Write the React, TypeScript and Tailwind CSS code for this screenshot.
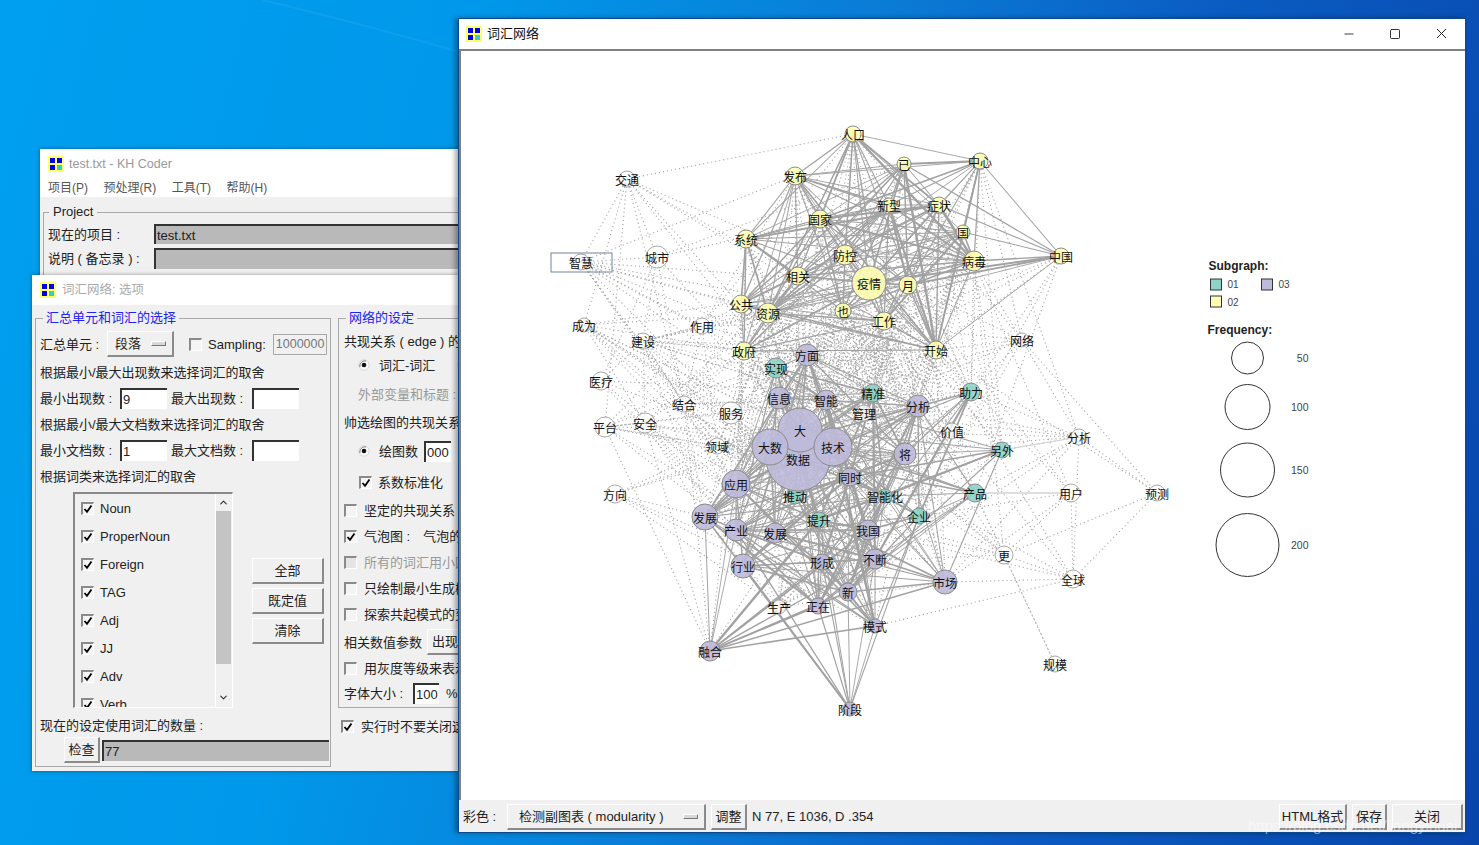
import { ChevronDown, ChevronUp, Minus, Square, X } from "lucide-react";
import type { ReactNode } from "react";

type Group = "a" | "b" | "c" | "w";
type GraphNode = [string, number, number, number, Group];

const NODES: GraphNode[] = [
  ["人口", 853, 135, 8, "b"], ["发布", 795, 177, 9, "b"], ["已", 904, 165, 7, "b"],
  ["中心", 980, 162, 8, "b"], ["新型", 889, 206, 7, "b"], ["症状", 939, 206, 8, "b"],
  ["国家", 820, 220, 9, "b"], ["国", 963, 233, 7, "b"], ["系统", 746, 240, 9, "b"],
  ["防控", 845, 256, 10, "b"], ["病毒", 974, 262, 10, "b"], ["中国", 1061, 257, 8, "b"],
  ["疫情", 869, 284, 17, "b"], ["月", 908, 286, 9, "b"], ["相关", 798, 277, 9, "b"],
  ["公共", 741, 305, 9, "b"], ["资源", 768, 314, 10, "b"], ["也", 843, 312, 8, "b"],
  ["工作", 884, 322, 9, "b"], ["开始", 936, 351, 9, "b"], ["政府", 744, 352, 9, "b"],

  ["实现", 776, 369, 10, "a"], ["精准", 873, 394, 9, "a"], ["助力", 971, 393, 9, "a"],
  ["另外", 1002, 451, 8, "a"], ["产品", 975, 494, 9, "a"], ["智能化", 885, 497, 7, "a"],
  ["企业", 919, 517, 8, "a"], ["推动", 795, 497, 8, "a"], ["提升", 819, 521, 8, "a"],

  ["数据", 798, 460, 32, "c"], ["大", 800, 431, 22, "c"], ["大数", 770, 448, 18, "c"],
  ["技术", 833, 448, 19, "c"], ["方面", 807, 356, 11, "c"], ["信息", 779, 399, 11, "c"],
  ["智能", 826, 401, 10, "c"], ["分析", 918, 407, 11, "c"], ["将", 905, 455, 11, "c"],
  ["同时", 850, 478, 9, "c"], ["应用", 736, 485, 14, "c"], ["发展", 705, 518, 13, "c"],
  ["产业", 736, 531, 11, "c"], ["发展", 775, 534, 10, "c"], ["我国", 868, 531, 10, "c"],
  ["不断", 875, 560, 10, "c"], ["形成", 822, 563, 8, "c"], ["行业", 743, 567, 12, "c"],
  ["新", 848, 593, 9, "c"], ["正在", 818, 607, 8, "c"], ["模式", 875, 627, 7, "c"],
  ["融合", 710, 652, 10, "c"], ["阶段", 850, 710, 7, "c"], ["市场", 945, 583, 12, "c"],

  ["生产", 779, 608, 7, "w"], ["管理", 864, 414, 8, "w"], ["交通", 627, 180, 8, "w"],
  ["智慧", 581, 263, 8, "w"], ["城市", 657, 258, 11, "w"], ["成为", 584, 326, 7, "w"],
  ["建设", 643, 342, 8, "w"], ["作用", 702, 327, 8, "w"], ["医疗", 601, 382, 9, "w"],
  ["结合", 684, 405, 8, "w"], ["服务", 731, 414, 11, "w"], ["平台", 605, 428, 10, "w"],
  ["安全", 645, 424, 10, "w"], ["领域", 717, 447, 8, "w"], ["方向", 615, 495, 9, "w"],
  ["网络", 1022, 341, 7, "w"], ["价值", 952, 432, 8, "w"], ["分析", 1079, 438, 8, "w"],
  ["用户", 1071, 494, 9, "w"], ["预测", 1157, 494, 8, "w"], ["更", 1004, 556, 9, "w"],
  ["全球", 1073, 580, 9, "w"], ["规模", 1055, 665, 8, "w"],
];

const FILL: Record<Group, string> = { a: "#8dd3c7", b: "#ffffb3", c: "#bebada", w: "#ffffff" };

// small fixed-seed generator so the graph comes out the same on every load
let seed = 20211;
const rnd = () => {
  seed = (seed * 1664525 + 1013904223) % 4294967296;
  return seed / 4294967296;
};

type Edge = { x1: number; y1: number; x2: number; y2: number; dotted: boolean; w: number };

function buildEdges() {
  const edges: Edge[] = [];
  for (let i = 0; i < NODES.length; i++) {
    for (let j = i + 1; j < NODES.length; j++) {
      const [n1, x1, y1, , g1] = NODES[i];
      const [n2, x2, y2, , g2] = NODES[j];
      const d = Math.hypot(x1 - x2, y1 - y2);
      const pair = [g1, g2].sort().join("");
      const hit = rnd();
      // the two outer hubs only fan upward in the picture
      if (n1 === "融合" && n2 === "阶段") continue;
      if (n1 === "阶段" && n2 === "市场") continue;
      let p = 0;
      let dotted = false;
      if (pair === "bb") p = d < 235 ? 0.72 : 0;
      else if (pair === "cc") p = d < 245 ? 0.62 : 0;
      else if (pair === "aa") p = d < 210 ? 0.6 : 0;
      else if (pair === "ac") p = d < 210 ? 0.55 : 0;
      else {
        dotted = true;
        if (pair === "bc") p = d < 330 ? 0.5 : 0;
        else if (pair === "ab") p = d < 300 ? 0.28 : 0;
        else if (pair === "ww") p = d < 250 ? 0.3 : 0;
        else p = d < 300 ? 0.28 : 0;
      }
      if (hit < p) {
        edges.push({ x1, y1, x2, y2, dotted, w: dotted ? 1 : 0.9 + rnd() * rnd() * 1.6 });
      }
    }
  }
  return edges;
}

const EDGES = buildEdges();

function NetworkChart() {
  return (
    <svg className="block" width={1004} height={749} viewBox="461 52 1004 749">
      {EDGES.filter((e) => e.dotted).map((e, i) => (
        <line key={i} x1={e.x1} y1={e.y1} x2={e.x2} y2={e.y2} stroke="#a4a4a4" strokeWidth={1.1} strokeDasharray="1.1 3" />
      ))}
      {EDGES.filter((e) => !e.dotted).map((e, i) => (
        <line key={i} x1={e.x1} y1={e.y1} x2={e.x2} y2={e.y2} stroke="#a2a2a2" strokeWidth={e.w} />
      ))}
      <line x1={975} y1={494} x2={1071} y2={494} stroke="#d4d4d4" strokeWidth={1.4} />
      <line x1={1002} y1={451} x2={1079} y2={438} stroke="#d4d4d4" strokeWidth={1.2} />
      {NODES.map(([label, x, y, r, g], i) => (
        <circle
          key={i}
          cx={x}
          cy={y}
          r={r}
          fill={FILL[g]}
          fillOpacity={g === "w" ? 0.75 : 0.9}
          stroke={g === "w" ? "#a8a8a8" : "#8a8a8a"}
          strokeWidth={1}
          data-label={label}
        />
      ))}
      <rect x={551} y={254} width={61} height={19} fill="none" stroke="#70829b" strokeWidth={1} />
      <g className="font-['Noto_Sans_CJK_SC',sans-serif]" fontSize={12} fill="#111" textAnchor="middle" dominantBaseline="central">
        {NODES.map(([label, x, y], i) => (
          <text key={i} x={x} y={y}>
            {label}
          </text>
        ))}
      </g>

      <g className="font-['Liberation_Sans',sans-serif]" transform="translate(0.5 1)">
        <text x={1208} y={270} fontSize={12} fontWeight={700} fill="#222">Subgraph:</text>
        <rect x={1210} y={279} width={11} height={11} fill="#8dd3c7" stroke="#333" />
        <rect x={1261} y={279} width={11} height={11} fill="#bebada" stroke="#333" />
        <rect x={1210} y={296} width={11} height={11} fill="#ffffb3" stroke="#333" />
        <text x={1227} y={288} fontSize={10} fill="#444">01</text>
        <text x={1278} y={288} fontSize={10} fill="#444">03</text>
        <text x={1227} y={306} fontSize={10} fill="#444">02</text>
        <text x={1207} y={334} fontSize={12} fontWeight={700} fill="#222">Frequency:</text>
        <circle cx={1247} cy={358} r={16} fill="none" stroke="#333" />
        <circle cx={1247} cy={407} r={22.5} fill="none" stroke="#333" />
        <circle cx={1247} cy={470} r={27} fill="none" stroke="#333" />
        <circle cx={1247} cy={545} r={31.5} fill="none" stroke="#333" />
        <text x={1308} y={362} fontSize={10.5} fill="#444" textAnchor="end">50</text>
        <text x={1308} y={411} fontSize={10.5} fill="#444" textAnchor="end">100</text>
        <text x={1308} y={474} fontSize={10.5} fill="#444" textAnchor="end">150</text>
        <text x={1308} y={549} fontSize={10.5} fill="#444" textAnchor="end">200</text>
      </g>
    </svg>
  );
}

function AppIcon() {
  return (
    <div className="grid h-[16px] w-[16px] shrink-0 grid-cols-2 gap-[2px] bg-[#ffff66] p-[2px]">
      <div className="bg-[#0000e6]" />
      <div className="bg-[#0000e6]" />
      <div className="bg-[#0000e6]" />
      <div className="bg-[#33cccc]" />
    </div>
  );
}

const raised = "flex items-center justify-center bg-[#f0f0f0] border-t border-l border-t-white border-l-white border-r-2 border-b-2 border-r-[#8a8a8a] border-b-[#8a8a8a]";
const sunkenGray = "flex items-center bg-[#b9b9b9] border-t-2 border-l-2 border-t-[#333] border-l-[#333] pl-[1px]";
const sunkenWhite = "flex items-center bg-white border-t-2 border-l-2 border-t-[#333] border-l-[#333] pl-[1px]";

function Btn({ className, children }: { className: string; children: ReactNode }) {
  return <div className={`${raised} ${className}`}>{children}</div>;
}

function Check({ checked, disabled }: { checked?: boolean; disabled?: boolean }) {
  return (
    <span
      className={`flex h-[13px] w-[13px] shrink-0 items-center justify-center border-t-2 border-l-2 border-t-[#8a8a8a] border-l-[#8a8a8a] border-r border-b border-r-white border-b-white ${disabled ? "bg-[#e4e4e4]" : "bg-[#f4f4f4]"}`}
    >
      {checked && (
        <svg width="10" height="10" viewBox="0 0 10 10">
          <path d="M1.5 5 L4 7.8 L8.5 1.5" fill="none" stroke="#000" strokeWidth="1.8" />
        </svg>
      )}
    </span>
  );
}

function Radio() {
  return (
    <svg width="12" height="12" viewBox="0 0 12 12" className="shrink-0">
      <circle cx="6" cy="6" r="5.2" fill="#f8f8f8" stroke="#d8d8d8" />
      <path d="M2 8 A5 5 0 0 1 8 2" fill="none" stroke="#777" />
      <circle cx="6" cy="6" r="2.3" fill="#111" />
    </svg>
  );
}

function Indicator() {
  return <span className="block h-[5px] w-[15px] border border-t-white border-l-white border-r-[#777] border-b-[#777] bg-[#d8d8d8]" />;
}

function ListRow({ label }: { label: string }) {
  return (
    <div className="flex h-[28px] shrink-0 items-center pl-[6px]">
      <Check checked />
      <span className="ml-[6px]">{label}</span>
    </div>
  );
}

function BackWindow() {
  return (
    <div className="absolute left-[40px] top-[149px] h-[140px] w-[418px] bg-[#f0f0f0] shadow-[0_0_4px_rgba(0,0,0,0.4)]">
      <div className="flex h-[30px] items-center gap-[5px] bg-white pl-[8px] text-[12.5px] text-[#999]">
        <AppIcon />
        <span>test.txt - KH Coder</span>
      </div>
      <div className="flex h-[18px] items-center gap-[15.5px] bg-white pl-[8px] text-[12px] text-[#555]">
        <span>项目(P)</span>
        <span>预处理(R)</span>
        <span>工具(T)</span>
        <span>帮助(H)</span>
      </div>
      <fieldset className="ml-[3px] mt-[6px] h-[100px] border border-r-0 border-[#a8a8a8] pl-[4px]">
        <legend className="ml-[1px] h-[18px] px-[4px] leading-[18px]">Project</legend>
        <div className="mt-[3px] flex h-[20px] items-center">
          <span className="w-[106px]">现在的项目 :</span>
          <div className={`${sunkenGray} h-[20px] flex-1`}>test.txt</div>
        </div>
        <div className="mt-[4px] flex h-[21px] items-center">
          <span className="w-[106px]">说明 ( 备忘录 ) :</span>
          <div className={`${sunkenGray} h-[21px] flex-1`} />
        </div>
      </fieldset>
    </div>
  );
}

function OptionWindow() {
  return (
    <div className="absolute left-[32px] top-[275px] flex h-[496px] w-[427px] flex-col bg-[#f0f0f0] shadow-[0_0_4px_rgba(0,0,0,0.4)]">
      <div className="flex h-[30px] shrink-0 items-center gap-[6px] bg-white pl-[8px] text-[12.5px] text-[#aaa]">
        <AppIcon />
        <span>词汇网络: 选项</span>
      </div>
      <div className="flex flex-1 pl-[3px] pt-[4px]">
        <fieldset className="h-[458px] w-[296px] shrink-0 border border-[#a8a8a8] pl-[4px]">
          <legend className="ml-[3px] h-[18px] px-[3px] leading-[18px] text-[#2222ee]">汇总单元和词汇的选择</legend>
          <div className="mt-[4px] flex h-[26px] items-center">
            <span className="w-[67px]">汇总单元 :</span>
            <Btn className="h-[26px] w-[67px] !justify-between pl-[7px] pr-[6px]">
              <span>段落</span>
              <Indicator />
            </Btn>
            <div className="ml-[15px]">
              <Check />
            </div>
            <span className="ml-[6px]">Sampling:</span>
            <div className="ml-[7px] flex h-[21px] w-[54px] items-center border border-[#a8a8a8] pl-[2px] text-[12.5px] text-[#777]">1000000</div>
          </div>
          <div className="mt-[2px] flex h-[26px] items-center">根据最小/最大出现数来选择词汇的取舍</div>
          <div className="flex h-[26px] items-center">
            <span className="w-[80px]">最小出现数 :</span>
            <div className={`${sunkenWhite} h-[21px] w-[47px]`}>9</div>
            <span className="ml-[4px] w-[81px]">最大出现数 :</span>
            <div className={`${sunkenWhite} h-[21px] w-[47px]`} />
          </div>
          <div className="flex h-[26px] items-center">根据最小/最大文档数来选择词汇的取舍</div>
          <div className="flex h-[26px] items-center">
            <span className="w-[80px]">最小文档数 :</span>
            <div className={`${sunkenWhite} h-[21px] w-[47px]`}>1</div>
            <span className="ml-[4px] w-[81px]">最大文档数 :</span>
            <div className={`${sunkenWhite} h-[21px] w-[47px]`} />
          </div>
          <div className="flex h-[26px] items-center">根据词类来选择词汇的取舍</div>
          <div className="mt-[3px] flex">
            <div className="ml-[33px] flex h-[216px] w-[160px] overflow-hidden border-t-2 border-l-2 border-t-[#888] border-l-[#888] border-r border-b border-r-white border-b-white">
              <div className="flex h-[240px] w-[141px] flex-col border-r border-r-white">
                {["Noun", "ProperNoun", "Foreign", "TAG", "Adj", "JJ", "Adv", "Verb"].map((t) => (
                  <ListRow key={t} label={t} />
                ))}
              </div>
              <div className="flex w-[15px] flex-col items-center">
                <div className="flex h-[17px] shrink-0 items-center">
                  <ChevronUp size={11} strokeWidth={2.5} color="#333" />
                </div>
                <div className="h-[153px] w-full shrink-0 bg-[#c4c4c4]" />
                <div className="mt-auto flex h-[17px] shrink-0 items-center pb-[2px]">
                  <ChevronDown size={11} strokeWidth={2.5} color="#333" />
                </div>
              </div>
            </div>
            <div className="ml-[19px] mt-[66px] flex w-[72px] flex-col gap-[4px]">
              <Btn className="h-[26px]">全部</Btn>
              <Btn className="h-[26px]">既定值</Btn>
              <Btn className="h-[26px]">清除</Btn>
            </div>
          </div>
          <div className="mt-[6px] flex h-[22px] items-center">现在的设定使用词汇的数量 :</div>
          <div className="mt-[1px] flex items-center">
            <Btn className="ml-[24px] h-[26px] w-[36px]">检查</Btn>
            <div className={`${sunkenGray} ml-[2px] h-[21px] w-[227px]`}>77</div>
          </div>
        </fieldset>
        <div className="ml-[7px] flex w-[200px] shrink-0 flex-col">
          <fieldset className="h-[399px] border border-[#a8a8a8] pl-[5px] whitespace-nowrap">
            <legend className="ml-[2px] h-[18px] px-[3px] leading-[18px] text-[#2222ee]">网络的设定</legend>
            <div className="mt-[4px] flex h-[20px] items-center">共现关系 ( edge ) 的设定</div>
            <div className="flex h-[28px] items-center pl-[14px]">
              <Radio />
              <span className="ml-[9px]">词汇-词汇</span>
              <span className="ml-[22px]">
                <Radio />
              </span>
            </div>
            <div className="flex h-[30px] items-center pl-[14px] text-[#999]">外部变量和标题 :</div>
            <div className="flex h-[26px] items-center">帅选绘图的共现关系</div>
            <div className="flex h-[32px] items-center pl-[14px]">
              <Radio />
              <span className="ml-[9px]">绘图数</span>
              <div className={`${sunkenWhite} ml-[6px] h-[21px] w-[27px]`}>000</div>
            </div>
            <div className="flex h-[30px] items-center pl-[15px]">
              <Check checked />
              <span className="ml-[6px]">系数标准化</span>
            </div>
            <div className="flex h-[26px] items-center">
              <Check />
              <span className="ml-[7px]">坚定的共现关系</span>
            </div>
            <div className="flex h-[26px] items-center">
              <Check checked />
              <span className="ml-[7px]">气泡图 :</span>
              <span className="ml-[13px]">气泡的大小</span>
            </div>
            <div className="flex h-[26px] items-center text-[#999]">
              <Check disabled />
              <span className="ml-[7px]">所有的词汇用小圆</span>
            </div>
            <div className="flex h-[26px] items-center">
              <Check />
              <span className="ml-[7px]">只绘制最小生成树</span>
            </div>
            <div className="flex h-[26px] items-center">
              <Check />
              <span className="ml-[7px]">探索共起模式的变化</span>
            </div>
            <div className="flex h-[30px] items-center">
              <span>相关数值参数</span>
              <Btn className="ml-[5px] h-[26px] w-[60px] !justify-start pl-[4px]">出现数</Btn>
            </div>
            <div className="flex h-[22px] items-center">
              <Check />
              <span className="ml-[7px]">用灰度等级来表示</span>
            </div>
            <div className="flex h-[28px] items-center">
              <span className="w-[69px]">字体大小 :</span>
              <div className={`${sunkenWhite} h-[21px] w-[26px]`}>100</div>
              <span className="ml-[7px]">%</span>
            </div>
          </fieldset>
          <div className="mt-[8px] flex h-[20px] items-center whitespace-nowrap pl-[3px]">
            <Check checked />
            <span className="ml-[7px]">实行时不要关闭这个窗口</span>
          </div>
        </div>
      </div>
    </div>
  );
}

function GraphWindow() {
  return (
    <div className="absolute left-[458px] top-[18px] flex h-[815px] w-[1008px] flex-col border border-[#0b4a8a] bg-[#f0f0f0] shadow-[-3px_0_5px_rgba(0,0,0,0.35)]">
      <div className="flex h-[30px] shrink-0 items-center bg-white pb-[1px] pl-[7px] text-[#111]">
        <AppIcon />
        <span className="ml-[5px]">词汇网络</span>
        <div className="ml-auto flex items-center">
          <span className="flex w-[46px] justify-center">
            <Minus size={14} strokeWidth={1.4} color="#111" />
          </span>
          <span className="flex w-[46px] justify-center">
            <Square size={12} strokeWidth={1.7} color="#111" />
          </span>
          <span className="mr-[1px] flex w-[46px] justify-center">
            <X size={17} strokeWidth={1.3} color="#111" />
          </span>
        </div>
      </div>
      <div className="h-[751px] shrink-0 overflow-hidden border-t-2 border-l-2 border-t-[#808080] border-l-[#808080] bg-white">
        <NetworkChart />
      </div>
      <div className="flex flex-1 items-center pl-[4px] pt-[1px]">
        <span className="w-[44px]">彩色 :</span>
        <Btn className="h-[26px] w-[199px] !justify-between pl-[11px] pr-[6px]">
          <span>检测副图表 ( modularity )</span>
          <Indicator />
        </Btn>
        <Btn className="ml-[5px] h-[26px] w-[36px]">调整</Btn>
        <span className="ml-[5px]">N 77, E 1036, D .354</span>
        <div className="ml-auto flex gap-[5px] pr-[2px]">
          <Btn className="h-[26px] w-[68px]">HTML格式</Btn>
          <Btn className="h-[26px] w-[35px]">保存</Btn>
          <Btn className="h-[26px] w-[71px]">关闭</Btn>
        </div>
      </div>
    </div>
  );
}

export default function App() {
  return (
    <div className="relative h-[845px] w-[1479px] overflow-hidden bg-[linear-gradient(105deg,#009fef_0%,#0098ea_28%,#0a7cd6_52%,#0a5cc2_72%,#0845aa_100%)] font-['Liberation_Sans','Noto_Sans_CJK_SC',sans-serif] text-[13px] leading-none text-[#222]">
      <svg className="absolute left-0 top-0" width={470} height={60} viewBox="0 0 470 60">
        <path d="M262 0 Q340 18 460 52" fill="none" stroke="#ffffff" strokeOpacity={0.06} strokeWidth={2} />
      </svg>
      <BackWindow />
      <OptionWindow />
      <GraphWindow />
      <div className="absolute left-[1248px] top-[818px] text-[15px] text-white/50">https://blog.csdn.net/liangyihuai</div>
    </div>
  );
}
